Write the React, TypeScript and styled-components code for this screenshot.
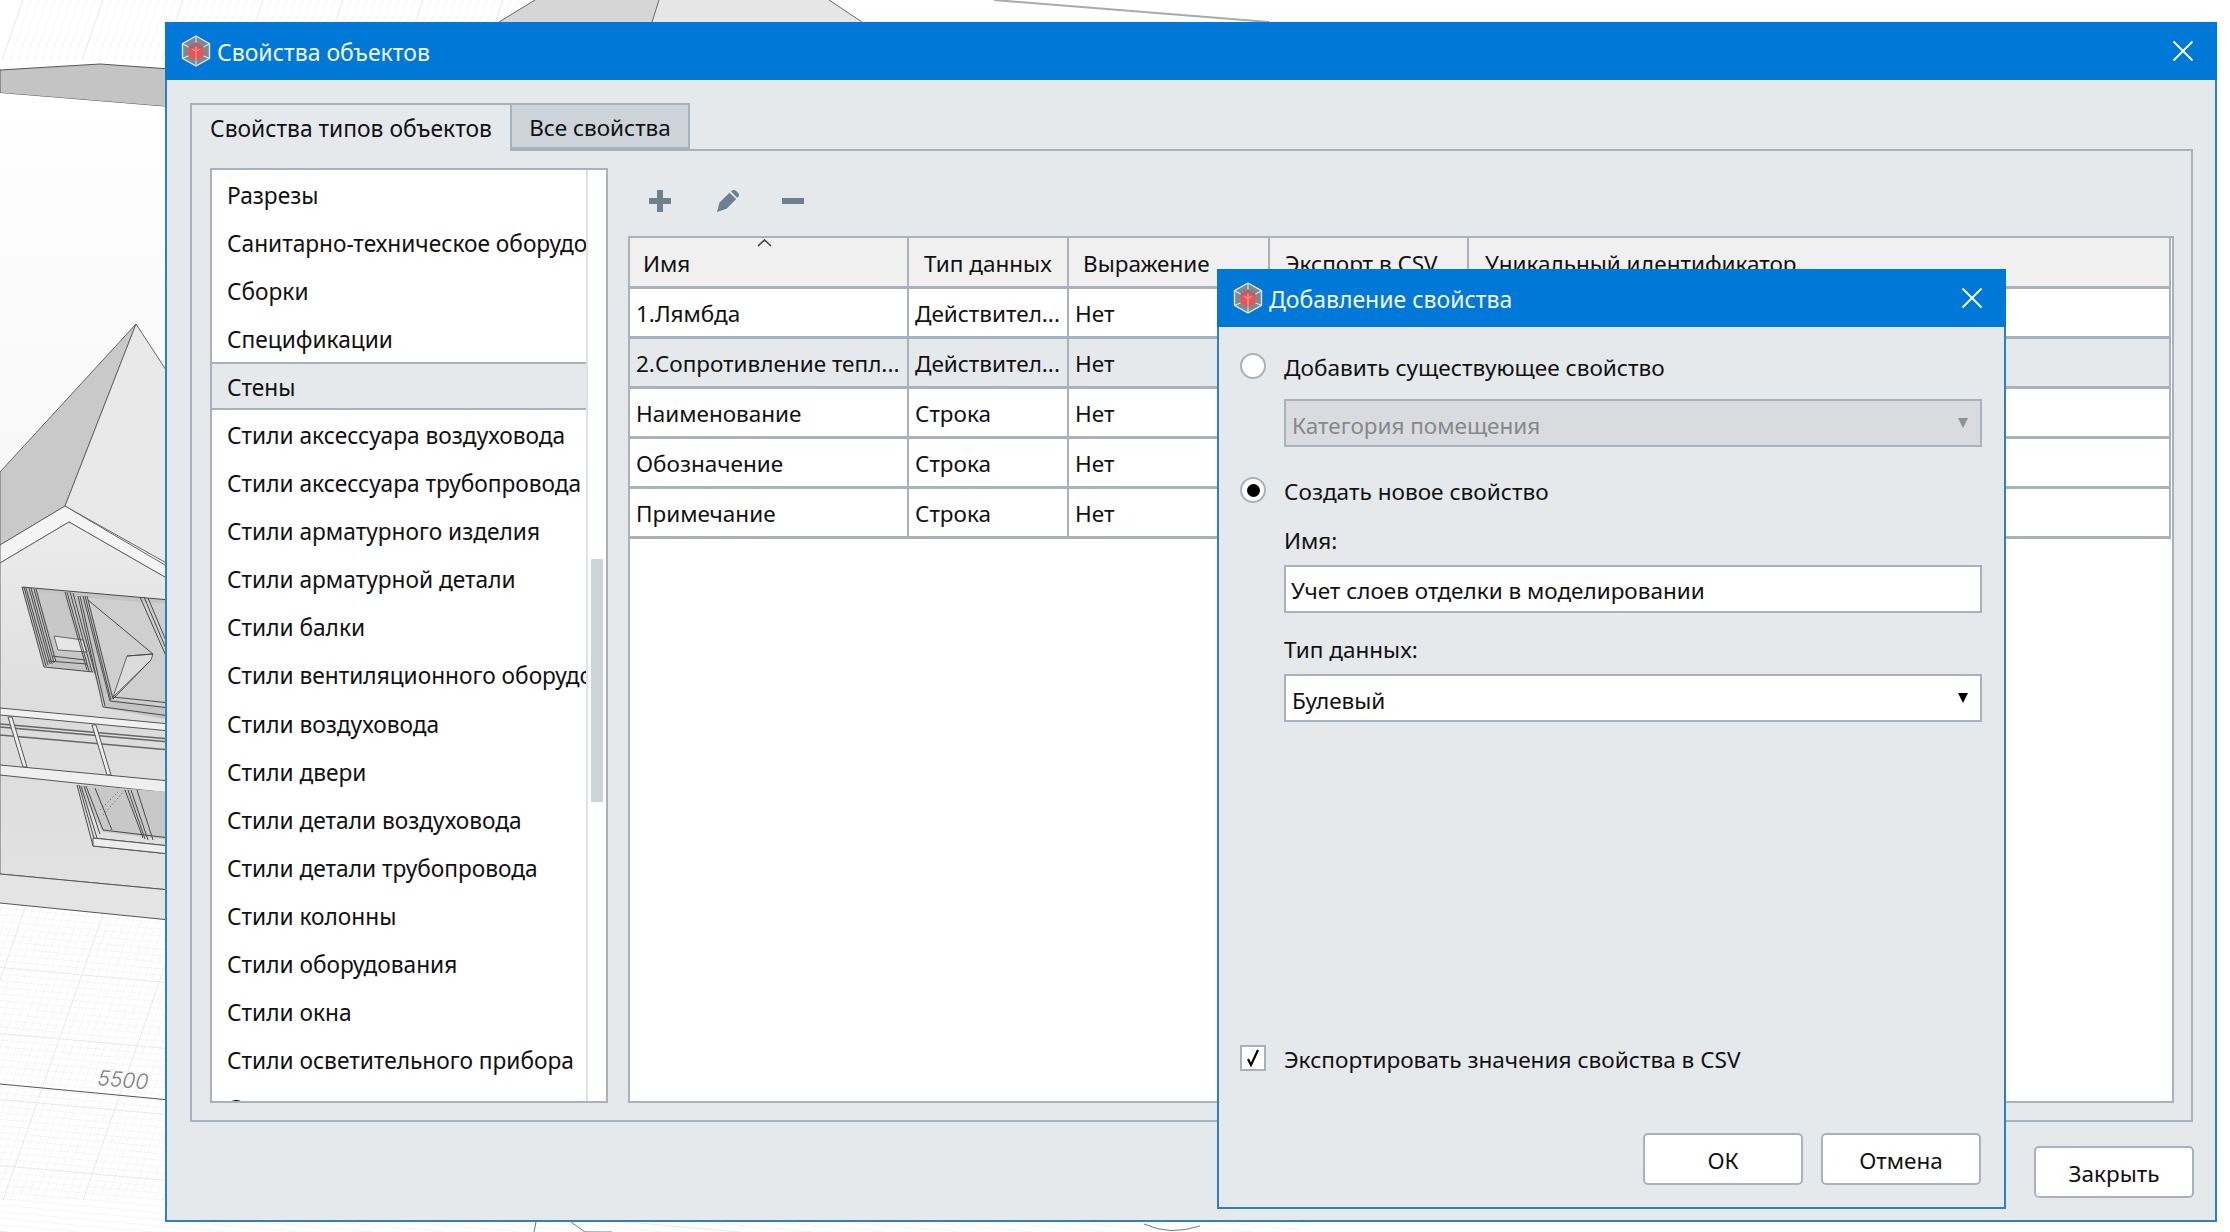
import React from "react";
import styled, { createGlobalStyle } from "styled-components";

const FONT = `"Noto Sans", "Open Sans", "Liberation Sans", sans-serif`;
const LINE = "#a9b2ba";
const CHROME = "#e6e9ec";
const BLUE = "#0078d7";

const Global = createGlobalStyle`
  html, body { margin: 0; padding: 0; background: #fff; }
  #root { width: 2230px; height: 1232px; }
  * { box-sizing: border-box; }
`;

const Desktop = styled.div`
  position: relative;
  width: 2230px;
  height: 1232px;
  overflow: hidden;
  background: #fff;
  font-family: ${FONT};
  font-size: 22.5px;
  color: #111;
`;

const SceneSvg = styled.svg`
  position: absolute;
  inset: 0;
`;

const Win = styled.section<{ $x: number; $y: number; $w: number; $h: number }>`
  position: absolute;
  left: ${(p) => p.$x}px;
  top: ${(p) => p.$y}px;
  width: ${(p) => p.$w}px;
  height: ${(p) => p.$h}px;
  display: flex;
  flex-direction: column;
  background: ${CHROME};
  border: 2px solid #2f7fc4;
  border-top: none;
`;

const TitleBar = styled.header`
  flex: none;
  height: 58px;
  margin: 0 -2px;
  padding: 0 23px 0 16px;
  display: flex;
  align-items: center;
  background: ${BLUE};
  color: #f2f7fc;
`;

const TitleText = styled.span`
  margin-left: 6px;
  padding-top: 2px;
  flex: 1;
  font-size: 23px;
  white-space: nowrap;
`;

const LogoSvg = styled.svg`
  flex: none;
  width: 30px;
  height: 32px;
`;

const CloseSvg = styled.svg`
  flex: none;
  width: 22px;
  height: 22px;
`;

const MainBody = styled.div`
  flex: 1;
  min-height: 0;
  display: flex;
  flex-direction: column;
  padding: 23px 22px 0 23px;
`;

const TabStrip = styled.div`
  flex: none;
  display: flex;
  height: 46px;
  position: relative;
  z-index: 1;
`;

const Tab = styled.div<{ $active?: boolean; $w: number }>`
  width: ${(p) => p.$w}px;
  height: ${(p) => (p.$active ? 48 : 46)}px;
  padding-top: ${(p) => (p.$active ? 1 : 3)}px;
  display: flex;
  align-items: center;
  justify-content: center;
  white-space: nowrap;
  font-size: ${(p) => (p.$active ? 22.8 : 22.5)}px;
  background: ${(p) => (p.$active ? CHROME : "#ccd3d9")};
  border: 2px solid ${LINE};
  border-bottom: ${(p) => (p.$active ? "none" : `2px solid ${LINE}`)};
  border-right: ${(p) => (p.$active ? "none" : `2px solid ${LINE}`)};
`;

const TabPanel = styled.div`
  flex: none;
  height: 973px;
  display: flex;
  gap: 20px;
  padding: 17px 17px 17px 18px;
  border: 2px solid ${LINE};
`;

const ListBox = styled.div`
  flex: none;
  width: 398px;
  display: flex;
  background: #fff;
  border: 2px solid ${LINE};
`;

const ListBody = styled.ul`
  flex: 1;
  min-width: 0;
  margin: 0;
  padding: 0;
  list-style: none;
  overflow: hidden;
`;

const ListRow = styled.li<{ $selected?: boolean }>`
  height: 48.05px;
  padding: 3px 0 0 15px;
  display: flex;
  align-items: center;
  font-size: 22.7px;
  white-space: nowrap;
  ${(p) =>
    p.$selected &&
    `background: ${CHROME}; border-top: 2px solid ${LINE}; border-bottom: 2px solid ${LINE};`}
`;

const ScrollTrack = styled.div`
  flex: none;
  width: 20px;
  padding: 389px 3px 0 3px;
  border-left: 2px solid #dde2e6;
`;

const ScrollThumb = styled.div`
  height: 243px;
  background: #ccd3d9;
`;

const RightPane = styled.div`
  flex: 1;
  min-width: 0;
  display: flex;
  flex-direction: column;
`;

const Toolbar = styled.div`
  flex: none;
  height: 68px;
  padding: 22px 0 0 21px;
  display: flex;
  gap: 46px;
`;

const ToolSvg = styled.svg<{ $ml?: number }>`
  flex: none;
  width: 22px;
  height: 22px;
  margin-left: ${(p) => p.$ml ?? 0}px;
  fill: #6e7f8f;
`;

const TableBox = styled.div`
  flex: 1;
  min-height: 0;
  position: relative;
  background: #fff;
  border: 2px solid ${LINE};
`;

const TableGrid = styled.div`
  margin-right: 1px;
  display: grid;
  grid-template-columns: 279px 160px 201px 199px 1fr;
  border-right: 2px solid ${LINE};
`;

const HeadCell = styled.div<{ $pad: number; $last?: boolean }>`
  position: relative;
  height: 51px;
  padding: 2px 0 0 ${(p) => p.$pad}px;
  display: flex;
  align-items: center;
  white-space: nowrap;
  background: #f0f0f0;
  border-bottom: 3px solid ${LINE};
  border-right: ${(p) => (p.$last ? "none" : `2px solid ${LINE}`)};
`;

const SortSvg = styled.svg`
  position: absolute;
  top: 1px;
  left: 127px;
  width: 15px;
  height: 8px;
`;

const BodyCell = styled.div<{ $selected?: boolean; $last?: boolean }>`
  height: 50px;
  padding: 1px 0 0 6px;
  display: flex;
  align-items: center;
  white-space: nowrap;
  overflow: hidden;
  background: ${(p) => (p.$selected ? CHROME : "#fff")};
  border-bottom: 3px solid ${LINE};
  border-right: ${(p) => (p.$last ? "none" : `2px solid ${LINE}`)};
`;

const Footer = styled.div`
  flex: 1;
  display: flex;
  justify-content: flex-end;
  margin-right: -1px;
  padding: 24px 0 0 0;
`;

const Button = styled.button`
  width: 160px;
  height: 52px;
  padding: 3px 0 0;
  font: inherit;
  color: inherit;
  background: #fff;
  border: 2px solid ${LINE};
  border-radius: 5px;
`;

const DialogBody = styled.div`
  flex: 1;
  min-height: 0;
  display: flex;
  flex-direction: column;
  padding: 26px 21px 22px 21px;
`;

const OptionRow = styled.label<{ $mt?: number }>`
  display: flex;
  align-items: center;
  gap: 18px;
  height: 26px;
  margin-top: ${(p) => p.$mt ?? 0}px;
  white-space: nowrap;
`;

const OptionText = styled.span`
  padding-top: 2px;
  font-size: 22.6px;
`;

const Radio = styled.span<{ $on?: boolean }>`
  flex: none;
  width: 26px;
  height: 26px;
  display: flex;
  align-items: center;
  justify-content: center;
  background: #fff;
  border: 2px solid ${LINE};
  border-radius: 50%;
  &::after {
    content: "";
    display: ${(p) => (p.$on ? "block" : "none")};
    width: 13px;
    height: 13px;
    border-radius: 50%;
    background: #000;
  }
`;

const CheckBox = styled.span`
  flex: none;
  width: 26px;
  height: 26px;
  background: #fff;
  border: 2px solid ${LINE};
  display: flex;
  align-items: center;
  justify-content: center;
`;

const FieldLabel = styled.div<{ $mt: number }>`
  height: 34px;
  margin: ${(p) => p.$mt}px 0 0 44px;
  display: flex;
  align-items: center;
`;

const Field = styled.div<{ $mt: number; $disabled?: boolean; $pad?: number; $top?: number }>`
  flex: none;
  height: 48px;
  margin: ${(p) => p.$mt}px 1px 0 44px;
  padding: ${(p) => p.$top ?? 5}px 12px 0 ${(p) => p.$pad ?? 6}px;
  display: flex;
  align-items: center;
  justify-content: space-between;
  white-space: nowrap;
  color: ${(p) => (p.$disabled ? "#85898c" : "inherit")};
  background: ${(p) => (p.$disabled ? "#d9dbde" : "#fff")};
  border: 2px solid ${LINE};
`;

const Caret = styled.span<{ $disabled?: boolean }>`
  width: 0;
  height: 0;
  margin-top: -6px;
  border-left: 5.5px solid transparent;
  border-right: 5.5px solid transparent;
  border-top: 10px solid ${(p) => (p.$disabled ? "#8f9396" : "#000")};
`;

const Spacer = styled.div`
  flex: 1;
`;

const DialogButtons = styled.div`
  flex: none;
  margin-top: 62px;
  padding-right: 2px;
  display: flex;
  justify-content: flex-end;
  gap: 18px;
`;

const Logo = () => (
  <LogoSvg viewBox="0 0 30 32">
    <path d="M15 1 28.5 8.7v14.6L15 31 1.5 23.3V8.7Z" fill="#7d8893" stroke="#dfe5ea" strokeWidth="1.4" />
    <path d="M15 7.5 22.5 12v9L15 25.2 7.5 21v-9Z" fill="#ee5253" />
    <path d="M7.5 12 15 7.5l7.5 4.5-3.3 1.9L15 11.5l-4.2 2.4Z" fill="#a8666a" />
    <path d="M1.5 8.7 7.5 12M28.5 8.7 22.5 12M1.5 23.3 7.5 21M28.5 23.3 22.5 21M15 1v6.5M15 31v-5.8" stroke="#dfe5ea" strokeWidth="1.1" fill="none" />
    <path d="M15 11.5v5M15 16.5l-4.2-2.6M15 16.5l4.2-2.6M15 16.5v8.7" stroke="#e9b3b3" strokeWidth="0.9" fill="none" />
  </LogoSvg>
);

const CloseIcon = () => (
  <CloseSvg viewBox="0 0 22 22">
    <path d="M1.5 1.5 20.5 20.5M20.5 1.5 1.5 20.5" stroke="#fff" strokeWidth="1.8" fill="none" />
  </CloseSvg>
);

const listItems = [
  "Разрезы",
  "Санитарно-техническое оборудование",
  "Сборки",
  "Спецификации",
  "Стены",
  "Стили аксессуара воздуховода",
  "Стили аксессуара трубопровода",
  "Стили арматурного изделия",
  "Стили арматурной детали",
  "Стили балки",
  "Стили вентиляционного оборудования",
  "Стили воздуховода",
  "Стили двери",
  "Стили детали воздуховода",
  "Стили детали трубопровода",
  "Стили колонны",
  "Стили оборудования",
  "Стили окна",
  "Стили осветительного прибора",
  "Стили перекрытия",
];

const headers = [
  { t: "Имя", pad: 13 },
  { t: "Тип данных", pad: 15 },
  { t: "Выражение", pad: 14 },
  { t: "Экспорт в CSV", pad: 15 },
  { t: "Уникальный идентификатор", pad: 16 },
];

const rows = [
  ["1.Лямбда", "Действител...", "Нет"],
  ["2.Сопротивление тепл...", "Действител...", "Нет"],
  ["Наименование", "Строка", "Нет"],
  ["Обозначение", "Строка", "Нет"],
  ["Примечание", "Строка", "Нет"],
];

const gridLines = () => {
  const major: React.ReactElement[] = [];
  const minor: React.ReactElement[] = [];
  for (let i = -40; i < 60; i++) {
    const x = 2 + i * 8 - 79;
    const el = <line key={`v${i}`} x1={x + 455} y1={-100} x2={x} y2={1200} />;
    (i % 10 === 0 ? major : minor).push(el);
  }
  for (let i = -10; i < 100; i++) {
    const y = 968 + (i - 50) * 6.6;
    const el = <line key={`h${i}`} x1={-50} y1={y - 5} x2={1400} y2={y + 0.09 * 1450 - 5} />;
    (i % 10 === 0 ? major : minor).push(el);
  }
  return { major, minor };
};

const Scene = () => {
  const { major, minor } = gridLines();
  return (
    <SceneSvg width="2230" height="1232" viewBox="0 0 2230 1232">
      <defs>
        <linearGradient id="wall" x1="0" y1="0" x2="0" y2="1">
          <stop offset="0" stopColor="#ececec" />
          <stop offset="0.55" stopColor="#dcdcdc" />
          <stop offset="1" stopColor="#e2e2e2" />
        </linearGradient>
        <linearGradient id="sky" x1="0" y1="0" x2="0" y2="1">
          <stop offset="0" stopColor="#ffffff" />
          <stop offset="1" stopColor="#f5f5f5" />
        </linearGradient>
        <clipPath id="gridClip">
          <path d="M0 0H1280L1280 60H0ZM0 880H1300V1232H0Z" />
        </clipPath>
      </defs>
      <g clipPath="url(#gridClip)">
        <g stroke="#f5f5f5" strokeWidth="1">{minor}</g>
        <g stroke="#e8e8e8" strokeWidth="1">{major}</g>
      </g>

      {/* top building pieces */}
      <path d="M535 0H659L652 22H499Z" fill="#d6d6d6" />
      <path d="M659 0H829L862 22H652Z" fill="#e6e6e6" />
      <path d="M535 0 499 22M659 0 652 22M829 0 862 22" stroke="#666" strokeWidth="1" fill="none" />
      <path d="M994 0 1269 22" stroke="#aaa" strokeWidth="2" fill="none" />

      {/* roof band */}
      <path d="M0 70 100 64 170 69V107L0 93Z" fill="#c4c4c4" stroke="#555" strokeWidth="1" />
      <path d="M0 93 170 107V600H0Z" fill="url(#sky)" />

      {/* roof */}
      <path d="M136 324 0 472V545L65 506Z" fill="#c9c9c9" stroke="#666" strokeWidth="1" />
      <path d="M136 324 170 376V565L65 506Z" fill="#e9e9e9" stroke="#666" strokeWidth="1" />
      <path d="M65 506 0 545V563L69 522 170 580V568Z" fill="#f4f4f4" stroke="#666" strokeWidth="1" />

      {/* wall */}
      <path d="M0 563 69 522 170 580V890L0 874Z" fill="url(#wall)" stroke="#666" strokeWidth="1" />
      <path d="M0 874 170 890V920L0 903Z" fill="#e4e4e4" />
      <path d="M0 874 170 890M0 903 170 920" stroke="#555" strokeWidth="1" fill="none" />

      {/* window A */}
      <path d="M22 587 170 600V720L105 708 93 672 44 667Z" fill="#c4c4c4" />
      <path d="M38 592 62 594 85 662 57 658Z" fill="#c8c8c8" />
      <path d="M54 636 83 640 87 652 58 650Z" fill="#e6e6e6" stroke="#666" />
      <path
        d="M22 587 170 600M22 587 44 667M24 587 46 666M26 588 48 665M29 588 50 664M31 588 52 664M34 589 54 663M36 589 56 662M65 592 87 670M67 592 89 671M70 592 92 672M73 593 95 673M44 667 93 672M48 661 87 664M52 656 85 660"
        stroke="#4a4a4a"
        strokeWidth="1"
        fill="none"
      />
      {/* window B */}
      <path d="M88 598 170 604V708L113 699Z" fill="#cfcfcf" />
      <path d="M127 656 113 697 151 660 153 654Z" fill="#dcdcdc" stroke="#666" />
      <path
        d="M78 596 103 707M80 596 105 706M83 596 110 701M85 596 111 700M87 596 113 699M88 600 153 654M127 656 153 654M113 699 151 660M140 597 170 665M144 597 170 658M148 598 170 650M103 707 170 716M110 701 170 708M113 697 170 703"
        stroke="#4a4a4a"
        strokeWidth="1"
        fill="none"
      />

      {/* balcony */}
      <path d="M0 708 170 724V731L0 715Z" fill="#f1f1f1" stroke="#555" strokeWidth="1" />
      <path d="M0 724 170 739M0 727 170 742M0 735 170 750" stroke="#666" strokeWidth="1.5" fill="none" />
      <path d="M8 717 23 767 27 767 12 717Z" fill="#ededed" stroke="#555" />
      <path d="M92 725 107 775 111 775 96 725Z" fill="#ededed" stroke="#555" />
      <path d="M0 765 170 781V793L0 775Z" fill="#efefef" stroke="#555" strokeWidth="1" />

      {/* lower window */}
      <path d="M77 785 170 792V840L103 832Z" fill="#c8c8c8" />
      <path d="M77 785 93 846M79 785 95 842M81 786 97 838M84 786 100 834M86 786 103 830M95 788 112 830M125 790 143 838M128 790 145 839M131 790 148 840M137 790 153 840M103 830 170 838M93 846 170 854M93 838 170 846" stroke="#4a4a4a" strokeWidth="1" fill="none" />
      <path d="M93 838 170 846V854L93 846Z" fill="#ededed" stroke="#555" strokeWidth="1" />
      <path d="M103 815 125 790M100 810 118 792" stroke="#777" strokeWidth="1" strokeDasharray="1.5 2" fill="none" />

      {/* dimension */}
      <path d="M0 1084 170 1100" stroke="#555" strokeWidth="1" />
      <text
        x="97"
        y="1085"
        transform="rotate(5 97 1085)"
        fontFamily="Inter, sans-serif"
        fontStyle="italic"
        fontWeight="300"
        fontSize="21"
        fill="#808080"
      >
        5500
      </text>

      {/* bottom bits */}
      <path d="M536 1222 534 1232M571 1222 585 1232 612 1232M1144 1224Q1170 1236 1200 1226" stroke="#777" strokeWidth="1" fill="none" />
    </SceneSvg>
  );
};

export default function App() {
  return (
    <Desktop>
      <Global />
      <Scene />
      <Win $x={165} $y={22} $w={2052} $h={1200}>
        <TitleBar>
          <Logo />
          <TitleText>Свойства объектов</TitleText>
          <CloseIcon />
        </TitleBar>
        <MainBody>
          <TabStrip>
            <Tab $active $w={320}>Свойства типов объектов</Tab>
            <Tab $w={180}>Все свойства</Tab>
          </TabStrip>
          <TabPanel>
            <ListBox>
              <ListBody>
                {listItems.map((t) => (
                  <ListRow key={t} $selected={t === "Стены"}>{t}</ListRow>
                ))}
              </ListBody>
              <ScrollTrack>
                <ScrollThumb />
              </ScrollTrack>
            </ListBox>
            <RightPane>
              <Toolbar>
                <ToolSvg viewBox="0 0 22 22">
                  <path d="M8 0h6v8h8v6h-8v8H8v-8H0V8h8Z" />
                </ToolSvg>
                <ToolSvg viewBox="0 0 22 22">
                  <path d="M0 22 2.5 12.5 12.5 2.8 19.2 9 9.5 18.8Z" />
                  <path d="M14 1.5 15.5.3c1-.6 2.4-.4 3.4.5l2.3 2.2c1 1 1 2.5.3 3.4l-1.3 1.3Z" />
                </ToolSvg>
                <ToolSvg viewBox="0 0 22 22" $ml={-3}>
                  <path d="M0 8h22v6H0Z" />
                </ToolSvg>
              </Toolbar>
              <TableBox>
                <TableGrid>
                  {headers.map((h, i) => (
                    <HeadCell key={h.t} $pad={h.pad} $last={i === headers.length - 1}>
                      {h.t}
                      {i === 0 && (
                        <SortSvg viewBox="0 0 15 8">
                          <path d="M1 7 7.5 1 14 7" stroke="#444" strokeWidth="1.6" fill="none" />
                        </SortSvg>
                      )}
                    </HeadCell>
                  ))}
                  {rows.map((r, ri) => (
                    <React.Fragment key={r[0]}>
                      {r.map((c, ci) => (
                        <BodyCell key={ci} $selected={ri === 1}>{c}</BodyCell>
                      ))}
                      <BodyCell $selected={ri === 1} />
                      <BodyCell $selected={ri === 1} $last />
                    </React.Fragment>
                  ))}
                </TableGrid>
              </TableBox>
            </RightPane>
          </TabPanel>
          <Footer>
            <Button>Закрыть</Button>
          </Footer>
        </MainBody>
      </Win>

      <Win $x={1217} $y={269} $w={789} $h={940}>
        <TitleBar>
          <Logo />
          <TitleText>Добавление свойства</TitleText>
          <CloseIcon />
        </TitleBar>
        <DialogBody>
          <OptionRow>
            <Radio />
            <OptionText>Добавить существующее свойство</OptionText>
          </OptionRow>
          <Field $mt={20} $disabled>
            Категория помещения
            <Caret $disabled />
          </Field>
          <OptionRow $mt={30}>
            <Radio $on />
            <OptionText>Создать новое свойство</OptionText>
          </OptionRow>
          <FieldLabel $mt={20}>Имя:</FieldLabel>
          <Field $mt={8} $pad={5} $top={3}>Учет слоев отделки в моделировании</Field>
          <FieldLabel $mt={19}>Тип данных:</FieldLabel>
          <Field $mt={8}>
            Булевый
            <Caret />
          </Field>
          <Spacer />
          <OptionRow>
            <CheckBox>
              <svg width="20" height="20" viewBox="0 0 20 20">
                <path d="M5 11 8 17 15 2" stroke="#000" strokeWidth="2.2" fill="none" />
              </svg>
            </CheckBox>
            <OptionText>Экспортировать значения свойства в CSV</OptionText>
          </OptionRow>
          <DialogButtons>
            <Button>ОК</Button>
            <Button>Отмена</Button>
          </DialogButtons>
        </DialogBody>
      </Win>
    </Desktop>
  );
}
